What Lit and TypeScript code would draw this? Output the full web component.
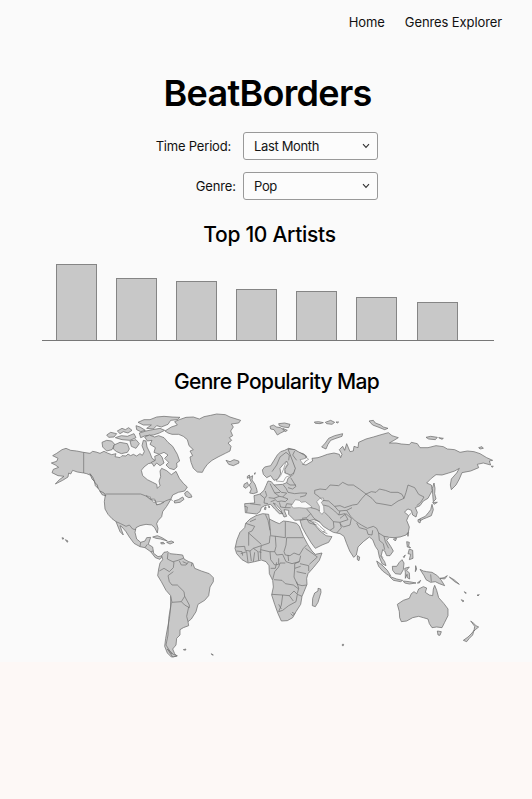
import { LitElement, html, svg, css } from "lit";
import { customElement, property } from "lit/decorators.js";
import { styleMap } from "lit/directives/style-map.js";

// Land masses, in map units (three units per CSS pixel).
const LAND: string[] = [
  // North and Central America
  "M78 130L92 136 110 138 130 142 150 145 158 139 168 141 180 145 192 139 202 144 215 149 228 146 225 155 240 158 246 152 258 153 264 147 272 152 280 148 290 153 300 146 307 151 313 140 306 122 310 106 318 108 321 126 330 144 336 160 345 166 338 173 325 176 312 186 304 196 308 212 322 224 338 232 350 238 352 250 360 242 357 228 362 215 360 198 365 190 380 197 394 209 408 199 418 220 430 235 442 246 434 258 415 262 398 270 392 284 380 304 368 320 365 335 355 346 350 356 354 370 352 384 344 368 335 360 318 358 300 362 288 368 285 382 290 402 302 412 315 408 320 398 332 397 325 418 338 426 341 445 354 455 368 452 360 463 346 458 332 440 315 428 300 425 282 415 268 396 258 380 246 366 240 362 250 390 240 380 228 350 216 341 204 328 195 312 193 290 196 270 182 262 172 246 162 228 152 211 140 206 131 204 112 201 98 196 92 207 86 204 84 216 68 226 46 237 58 224 72 214 54 212 36 203 40 193 56 187 46 180 34 174 50 169 54 160 38 152 50 145 66 134Z",
  // Islands along the Pacific coast
  "M150 206L158 216 164 230 156 222Z", "M164 232L172 240 174 250 166 242Z", "M180 258L192 264 198 273 186 269Z",
  // Newfoundland, Nova Scotia
  "M434 264L442 258 452 268 456 276 446 278 436 272Z", "M402 288L415 284 428 276 432 283 420 292 404 294Z",
  // Canadian arctic islands
  "M186 112L200 106 215 108 224 118 216 134 200 138 188 126Z", "M222 120L240 112 262 116 268 132 262 142 244 146 230 140 220 132Z", "M200 90L212 82 230 86 222 96 206 97Z", "M232 78L246 70 256 74 266 68 276 76 264 84 250 80 240 86Z", "M226 98L244 92 262 94 282 86 288 98 270 106 246 104Z", "M270 108L288 104 298 116 288 130 274 124Z", "M288 62L300 66 316 76 302 80 290 74Z", "M294 52L312 44 330 44 350 36 372 34 396 36 420 37 412 44 392 46 384 58 364 66 350 62 340 72 320 70 334 60 310 60Z", "M298 84L318 78 338 74 360 70 374 76 358 84 340 90 316 92 302 98Z", "M314 96L328 90 344 96 356 92 372 98 384 112 398 124 412 148 419 168 410 174 411 186 402 194 388 190 378 180 386 172 374 160 384 150 372 142 358 148 342 142 346 128 330 118 336 106 322 108Z", "M344 154L358 148 366 156 372 174 360 182 350 174 342 184 334 172 346 166Z",
  // Greenland, Iceland
  "M375 78L394 66 412 60 404 50 418 44 438 37 460 36 478 42 492 35 512 31 530 27 556 29 570 36 602 46 596 54 574 57 580 66 572 78 578 92 568 98 575 106 564 114 573 124 570 138 556 145 534 156 516 166 502 178 492 192 487 202 472 201 460 190 453 172 450 156 458 152 450 138 460 134 447 122 442 104 430 94 416 88 396 88 384 84Z",
  "M558 166L570 170 582 164 596 168 597 174 580 182 566 178Z",
  // Cuba, Hispaniola, islands off the Pacific coast
  "M338 396L352 392 366 398 382 408 362 402 348 400Z", "M380 412L394 408 402 412 390 417Z", "M362 413L370 412 374 416 364 417Z", "M66 398L72 400 68 403Z", "M76 404L84 408 82 412Z",
  // South America
  "M365 452L372 442 384 440 390 446 410 448 428 450 432 462 446 470 458 474 464 490 484 498 508 506 520 518 520 530 510 546 506 572 494 586 474 598 468 620 454 642 444 650 446 662 430 668 420 674 420 690 410 700 408 720 398 732 404 746 410 754 394 756 382 744 374 724 377 700 382 672 388 642 392 606 392 572 378 556 364 530 353 512 356 492 360 474 368 464Z",
  "M382 732L400 748 412 752 398 756Z", "M430 734L438 732 436 736Z", "M514 746L520 750 516 750Z",
  // Great Britain, Ireland
  "M628 218L638 212 636 225 645 238 650 252 652 262 640 266 629 264 634 252 628 240 634 232Z", "M612 238L622 232 626 242 618 250 611 246Z", "M622 214L628 210 630 216 622 220Z", "M642 206L646 203 645 208Z",
  // Scandinavia
  "M667 195L674 186 692 182 702 166 712 150 722 140 734 136 746 130 764 134 774 142 790 146 800 154 798 162 782 168 770 166 768 186 764 202 752 210 736 204 734 194 744 178 740 168 730 178 720 190 722 206 714 222 702 226 692 212 680 218 670 208Z",
  "M744 132L764 134 796 152 800 164 788 178 798 180 818 168 816 160 834 158 846 154 862 148 882 144 898 148 902 158 906 148 898 134 908 124 914 136 920 116 930 140 940 138 942 124 954 128 956 112 978 102 1000 96 1020 90 1045 83 1056 92 1075 98 1062 106 1048 114 1068 114 1084 117 1108 119 1114 112 1132 116 1140 128 1164 128 1188 122 1210 125 1222 132 1244 134 1260 142 1282 138 1302 140 1320 146 1340 158 1358 166 1348 168 1352 180 1330 174 1312 178 1316 188 1292 198 1266 203 1258 222 1248 240 1234 254 1231 240 1234 222 1250 204 1258 190 1244 198 1226 204 1206 210 1188 209 1174 220 1160 234 1174 240 1177 256 1164 280 1150 288 1140 302 1126 308 1132 322 1128 336 1118 330 1114 316 1104 312 1098 316 1094 322 1106 332 1100 346 1108 366 1105 382 1098 390 1080 396 1062 398 1048 397 1040 406 1052 424 1060 438 1050 452 1040 452 1034 438 1028 434 1023 454 1034 470 1038 482 1026 476 1018 456 1014 436 1006 424 998 404 988 396 970 410 954 426 949 450 941 457 929 438 920 416 912 394 900 386 880 382 866 374 850 364 838 350 822 344 802 348 790 344 764 346 746 328 746 316 732 314 740 334 732 336 722 314 708 298 700 294 712 310 728 326 718 326 704 312 692 298 674 302 664 308 660 320 650 327 616 323 614 296 644 294 642 272 660 267 672 256 678 242 684 228 694 230 702 240 728 238 740 233 744 220 760 208 766 190Z",
  // Corsica and Sardinia
  "M675 306L678 306 677 314 673 313Z", "M686 302L689 306 687 309Z",
  // Arabia and the Levant
  "M780 346L800 342 818 352 826 362 840 378 858 392 876 395 866 412 846 420 826 430 814 414 798 388 786 366Z",
  // Africa
  "M617 355L630 342 648 332 668 326 686 328 688 342 708 352 718 356 730 348 748 350 770 355 778 364 790 394 804 420 816 438 826 448 846 444 838 466 820 488 804 506 800 520 801 538 792 560 786 574 782 598 768 620 758 638 742 647 724 648 714 626 704 598 695 570 700 546 698 526 688 506 687 482 678 470 664 465 644 470 624 474 606 464 590 446 585 430 591 404 600 382 614 368Z",
  "M834 550L842 552 843 562 834 592 826 605 817 602 818 580 824 564 834 558Z",
  // Arctic seas
  "M690 64L700 60 710 66 722 68 734 78 722 84 712 90 702 74 692 72Z", "M716 56L734 54 750 58 746 68 730 66 718 62Z", "M728 70L742 76 736 80Z", "M823 51L836 50 850 53 840 56 826 55Z", "M856 52L872 46 884 52 876 58 860 56Z", "M888 51L896 51 892 54Z",
  "M845 126L856 114 866 100 884 92 908 86 906 94 888 100 872 106 864 118 858 132Z", "M987 48L1000 46 1006 54 1022 60 1030 66 1044 70 1034 74 1014 66 998 60Z", "M1158 97L1172 94 1192 97 1186 104 1166 102Z", "M1196 98L1210 100 1206 103Z", "M1316 128L1326 125 1330 130 1320 132Z", "M1354 183L1360 184 1356 187Z",
  // Sakhalin, Japan, Taiwan, Hainan
  "M1182 234L1185 250 1184 266 1188 282 1180 290 1178 268 1177 250Z", "M1178 292L1192 292 1182 298Z", "M1176 298L1180 314 1174 332 1160 338 1150 342 1136 350 1138 342 1156 334 1166 322 1172 314Z", "M1134 344L1142 344 1140 354 1134 350Z", "M1102 384L1106 382 1104 394Z", "M1060 402L1070 400 1066 408Z",
  // Sri Lanka, Indonesia, Philippines, New Guinea
  "M952 452L959 456 957 467 952 464Z", "M1010 468L1026 480 1042 496 1052 512 1044 510 1028 498 1016 484Z", "M1048 514L1070 522 1088 526 1082 530 1060 526Z", "M1090 528L1108 530 1128 534 1108 537 1094 534Z", "M1132 534L1142 526 1138 534Z", "M1057 484L1070 484 1078 472 1086 464 1092 474 1090 494 1082 508 1066 506 1058 496Z", "M1094 490L1108 486 1100 496 1108 504 1109 522 1102 518 1101 508 1096 520 1096 502Z", "M1100 410L1108 412 1106 424 1112 428 1102 426Z", "M1108 432L1118 436 1119 460 1108 464 1112 448 1104 446Z", "M1090 455L1096 450 1092 458Z", "M1127 482L1130 492 1126 500Z", "M1140 493L1150 498 1160 500 1176 502 1192 512 1204 526 1214 542 1198 536 1186 530 1172 532 1158 524 1152 512Z", "M1200 520L1212 518 1222 512 1214 522Z", "M1228 516L1242 524 1258 538 1244 530Z", "M1273 560L1279 564 1276 565Z", "M1264 584L1272 588 1268 590Z", "M1311 570L1318 569 1314 573Z",
  // Australia, Tasmania, New Zealand
  "M1072 598L1090 586 1108 580 1114 566 1122 560 1130 566 1136 552 1150 545 1160 549 1156 562 1168 570 1178 572 1180 552 1184 541 1190 556 1196 578 1212 596 1224 612 1224 632 1214 652 1206 668 1190 666 1176 668 1168 656 1164 642 1150 638 1136 634 1118 638 1100 648 1084 650 1079 638 1078 620Z",
  "M1192 678L1204 680 1200 691 1194 690Z", "M1292 648L1300 654 1308 662 1316 666 1306 674 1302 678 1304 664Z", "M1302 676L1298 690 1288 700 1280 710 1270 706 1284 696 1296 684Z", "M907 718L911 718 910 722 907 722Z",
];

const WATER: string[] = [
  // Black Sea, Caspian, Persian Gulf, White Sea, Baltic, Great Lakes
  "M754 302L766 284 778 286 784 292 796 290 812 302 816 307 798 310 778 308 760 309Z",
  "M830 290L840 280 850 279 852 286 844 292 851 304 852 320 846 328 838 320 838 304Z",
  "M818 350L828 352 840 364 856 378 848 380 832 366Z",
  "M780 164L790 162 800 158 806 163 796 169 790 178 784 170Z",
  "M738 170L730 194 722 212 708 228 730 230 738 216 752 211 734 204 734 190 744 174Z",
  "M318 272L332 276 330 282 344 282 346 292 340 292 334 282Z", "M346 292L360 290 372 292 360 298 350 298Z",
];

const BORDERS: string[] = [
  "M131 142V204", "M196 267H302L318 273 332 284 346 286 350 300 362 296 376 288 392 282 398 288", "M228 350L242 356 258 364 268 360 278 372 288 374",
  "M302 412L300 424M315 428L322 418M332 440L340 438",
  // South America
  "M384 444L382 462 402 472 400 488 388 500 372 490 358 498M400 470L414 466 430 460M428 470L442 476M400 500L384 512 388 530 396 540 412 540 432 560 434 574 424 590 396 592 392 574M434 574L448 600 448 608 434 600 424 590M446 606L440 634 444 650M394 592L386 640 384 690 378 720 396 748M446 470L438 480 424 480 418 468M456 474L454 484",
  // Europe
  "M630 296L662 300M614 304L622 306 620 322M660 268L674 280 680 272 676 258M674 280L672 294 684 296M690 236L698 252 704 264 718 274 702 280 686 278M702 240L712 250 724 262 740 264 728 276 718 274M704 264L720 262M730 240L738 250 744 262 764 266 782 264 800 264 796 272 780 276M740 233L750 240 768 240M744 248L758 252 768 244 752 218M702 280L712 290 724 288 736 290 744 282 728 276M718 292L722 306 736 308 740 296M736 308L752 308M740 296L756 298M692 290L704 286 M696 200L710 180 720 156 738 142M738 142L748 150 746 166M764 138L758 150 770 166",
  // Caucasus and Middle East
  "M800 312L812 326 800 338 786 340M812 308L828 312 840 318M812 326L822 340 840 352M800 342L808 354 830 360M848 380L862 386",
  // Central Asia, Mongolia, China
  "M824 256L840 252 858 254 870 240 896 242 908 232 924 240 940 240 958 252 978 267 966 280 952 298 938 300 914 308 900 302 884 304 866 288 848 286 838 276 824 266Z",
  "M978 267L994 260 1008 262 1018 252 1036 256 1052 262 1074 262 1086 268 1092 280 1074 288 1054 302 1032 298 1008 294 996 280Z",
  "M1092 280L1098 262 1104 240 1124 248 1136 268 1152 276 1142 292 1130 302",
  "M850 300L866 304 884 318 896 330 914 326 924 344 900 352 880 350 866 334 854 322M884 304L896 318 920 316 936 308M896 330L900 318M880 350L882 368 870 376M900 352L904 368 890 384M900 340L918 326 934 340 930 360 910 366 900 356",
  "M920 316L932 334 946 348 964 360 982 370 1000 364 1010 370 1016 384 1032 394 1046 396M950 354L958 368 980 374 984 388 996 390 998 376M1016 384L1018 406 1030 416 1034 434M1032 394L1036 410 1046 430M1106 332L1114 324M1022 452L1030 458M1172 508L1174 530",
  // Africa
  "M586 426L614 424 616 436 630 438 640 430 664 422 688 414 690 392 708 394 736 398M617 355L644 364 636 378 626 382 626 422M630 350L648 342M626 384L664 418M676 328L684 346 690 376M688 342L692 390M736 350V398M740 398H790M740 398L738 420 732 440 736 450 750 452 762 444 778 450 790 430 800 420M706 394L708 424 704 440 710 450 728 448M664 422L662 434 688 440 704 440M662 434L662 462M640 430L654 440 656 466M644 442L640 470M602 446L620 440 624 472M590 438L606 440 608 452M630 438L634 468M656 440L664 442M690 440L692 464 704 480 716 478 716 460M728 448L738 470 756 476 778 470 782 452M692 490L706 490 710 472M698 524L704 500 716 486 720 474 736 474M702 524L726 526 736 536 760 540 776 552M778 470L764 476 764 490 762 516 772 538 786 542 800 540M780 476L806 482 806 498M764 490L782 484M796 430L810 440 832 456 808 478M770 500L798 506M695 568L728 570 748 572 762 558M728 570L724 600 716 620 728 616 746 602 768 590 772 568 762 558M716 598L724 612M748 572L760 588M772 568L786 574M756 622L764 626 758 632 752 626M770 530L776 550 772 566M744 450L746 468",
];

const ARTISTS = [77, 63, 60, 52, 50, 44, 39];

@customElement("world-map")
export class WorldMap extends LitElement {
  static styles = css`
    :host { display: block; }
    .map { display: block; width: 460px; height: 260px; }
    .land { fill: #c8c8c8; stroke: #686868; stroke-width: 2.1; stroke-linejoin: round; }
    .water { fill: #fafafa; stroke: #7c7c7c; stroke-width: 1.8; }
    .border { fill: none; stroke: #6c6c6c; stroke-width: 2; stroke-linejoin: round; }
  `;
  render() {
    return html`<svg class="map" viewBox="0 0 1380 780" role="img" aria-label="World map">
      ${LAND.map((d) => svg`<path class="land" d=${d}></path>`)}
      ${WATER.map((d) => svg`<path class="water" d=${d}></path>`)}
      ${BORDERS.map((d) => svg`<path class="border" d=${d}></path>`)}
    </svg>`;
  }
}

@customElement("select-field")
export class SelectField extends LitElement {
  @property() value = "";
  static styles = css`
    :host { display: block; width: 134.5px; height: 28px; }
    .box { box-sizing: border-box; height: 28px; display: flex; align-items: center; justify-content: space-between; padding: 0 7px 0 10px; border: 1px solid #999; border-radius: 3px; background: #fcfcfc; font-size: 13px; letter-spacing: -0.35px; color: #151515; }
    .chevron { width: 8px; height: 6px; fill: none; stroke: #333; stroke-width: 1.1; }
  `;
  render() {
    return html`<div class="box" role="combobox" tabindex="0">
      <span>${this.value}</span>
      <svg class="chevron" viewBox="0 0 8 6"><path d="M1 1.2L4 4.4L7 1.2"></path></svg>
    </div>`;
  }
}

@customElement("app-root")
export class AppRoot extends LitElement {
  static styles = css`
    :host { display: block; height: 799px; background: #fdf8f6; font-family: Inter, "Liberation Sans", sans-serif; color: #111; }
    .page { box-sizing: border-box; height: 662px; background: #fafafa; overflow: hidden; }
    .nav { display: flex; justify-content: flex-end; gap: 20px; padding: 14px 30px 0 0; font-size: 13px; line-height: 16px; letter-spacing: -0.1px; }
    h1, h2 { margin: 0; text-align: center; color: #000; }
    h1 { margin-top: 41px; padding-left: 3px; font-size: 36px; line-height: 44px; font-weight: 600; letter-spacing: -0.7px; }
    h2 { font-size: 21px; line-height: 26px; font-weight: 500; letter-spacing: -0.3px; }
    .filters { display: grid; grid-template-columns: 236px 135px; column-gap: 7px; row-gap: 12px; margin-top: 17px; font-size: 13px; line-height: 16px; letter-spacing: -0.1px; }
    .label { justify-self: end; margin-top: 6px; }
    .label.wide { padding-right: 5px; letter-spacing: -0.2px; }
    .artists { margin-top: 22px; padding-left: 7px; letter-spacing: -0.3px; }
    .chart { box-sizing: border-box; width: 452px; height: 77px; margin: 16px 0 0 42px; padding-left: 14px; display: flex; gap: 19.1px; align-items: flex-end; border-bottom: 1px solid #777; }
    .bar { box-sizing: border-box; width: 41px; background: #c8c8c8; border: 1px solid #858585; border-bottom: 0; }
    .popularity { margin-top: 28px; padding-left: 21px; letter-spacing: -0.65px; }
    world-map { margin: 10px 0 0 40px; }
  `;
  render() {
    return html`<main class="page">
      <nav class="nav"><span>Home</span><span>Genres Explorer</span></nav>
      <h1>BeatBorders</h1>
      <div class="filters">
        <span class="label wide">Time Period:</span><select-field value="Last Month"></select-field>
        <span class="label">Genre:</span><select-field value="Pop"></select-field>
      </div>
      <h2 class="artists">Top 10 Artists</h2>
      <div class="chart">
        ${ARTISTS.map((h) => html`<div class="bar" style=${styleMap({ height: `${h - 1}px` })}></div>`)}
      </div>
      <h2 class="popularity">Genre Popularity Map</h2>
      <world-map></world-map>
    </main>`;
  }
}
